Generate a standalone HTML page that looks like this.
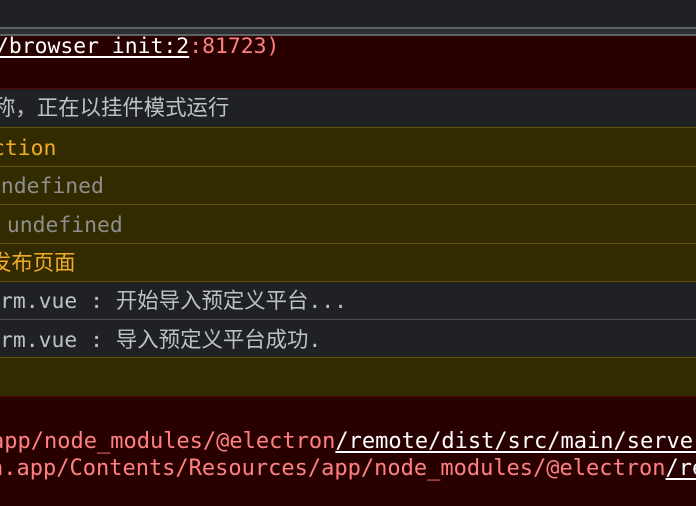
<!DOCTYPE html>
<html><head><meta charset="utf-8"><style>
*{margin:0;padding:0}
html,body{width:696px;height:506px;overflow:hidden}
body{background:#202124;position:relative;font-family:"DejaVu Sans Mono","Noto Sans CJK SC",monospace;font-size:21.4px}
#w{position:absolute;left:0;top:0;width:696px;height:506px;overflow:hidden}
.b{position:absolute;left:0;width:696px}
.t{position:absolute;white-space:pre;line-height:26px}
.g{color:#bdc1c6}.y{color:#f2ab26}.m{color:#8e8e8e}.r{color:#ff8080}
u{color:#fff;text-decoration:underline;text-underline-offset:3px}
</style></head><body><div id="w">
<div class="b" style="top:27px;height:2px;background:#5f6368"></div>
<div class="b" style="top:29px;height:5px;background:#2d2e31"></div>
<div class="b" style="top:34px;height:2px;background:#5f6368"></div>
<div class="b" style="top:36px;height:52px;background:#290000"></div>
<div class="b" style="top:88px;height:1px;background:#5c0000"></div>
<div class="b" style="top:127px;height:1px;background:#665500"></div>
<div class="b" style="top:128px;height:38px;background:#332b00"></div>
<div class="b" style="top:166px;height:1px;background:#665500"></div>
<div class="b" style="top:167px;height:37px;background:#332b00"></div>
<div class="b" style="top:204px;height:1px;background:#665500"></div>
<div class="b" style="top:205px;height:38px;background:#332b00"></div>
<div class="b" style="top:243px;height:1px;background:#665500"></div>
<div class="b" style="top:244px;height:37px;background:#332b00"></div>
<div class="b" style="top:281px;height:1px;background:#665500"></div>
<div class="b" style="top:319px;height:1px;background:#4a4c50"></div>
<div class="b" style="top:357px;height:1px;background:#665500"></div>
<div class="b" style="top:358px;height:38px;background:#332b00"></div>
<div class="b" style="top:396px;height:1px;background:#5c0000"></div>
<div class="b" style="top:397px;height:109px;background:#290000"></div>

<div class="t r" style="left:-4px;top:34px"><u>/browser_init:2</u>:81723)</div>
<div class="t g" style="left:-6px;top:96px">称，正在以挂件模式运行</div>
<div class="t y" style="left:-8px;top:136px">ction</div>
<div class="t m" style="left:-12px;top:174px">undefined</div>
<div class="t m" style="left:-6px;top:213px"> undefined</div>
<div class="t y" style="left:-10px;top:251px">发布页面</div>
<div class="t g" style="left:0;top:289px">rm.vue : 开始导入预定义平台...</div>
<div class="t g" style="left:0;top:328px">rm.vue : 导入预定义平台成功.</div>
<div class="t r" style="left:-9px;top:429px;font-size:22px"><span>app/node_modules/@electron</span><u>/remote/dist/src/main/server.js</u></div>
<div class="t r" style="left:-10px;top:456px;font-size:22px">n.app/Contents/Resources/app/node_modules/@electron<u>/remote</u></div>
</div></body></html>
